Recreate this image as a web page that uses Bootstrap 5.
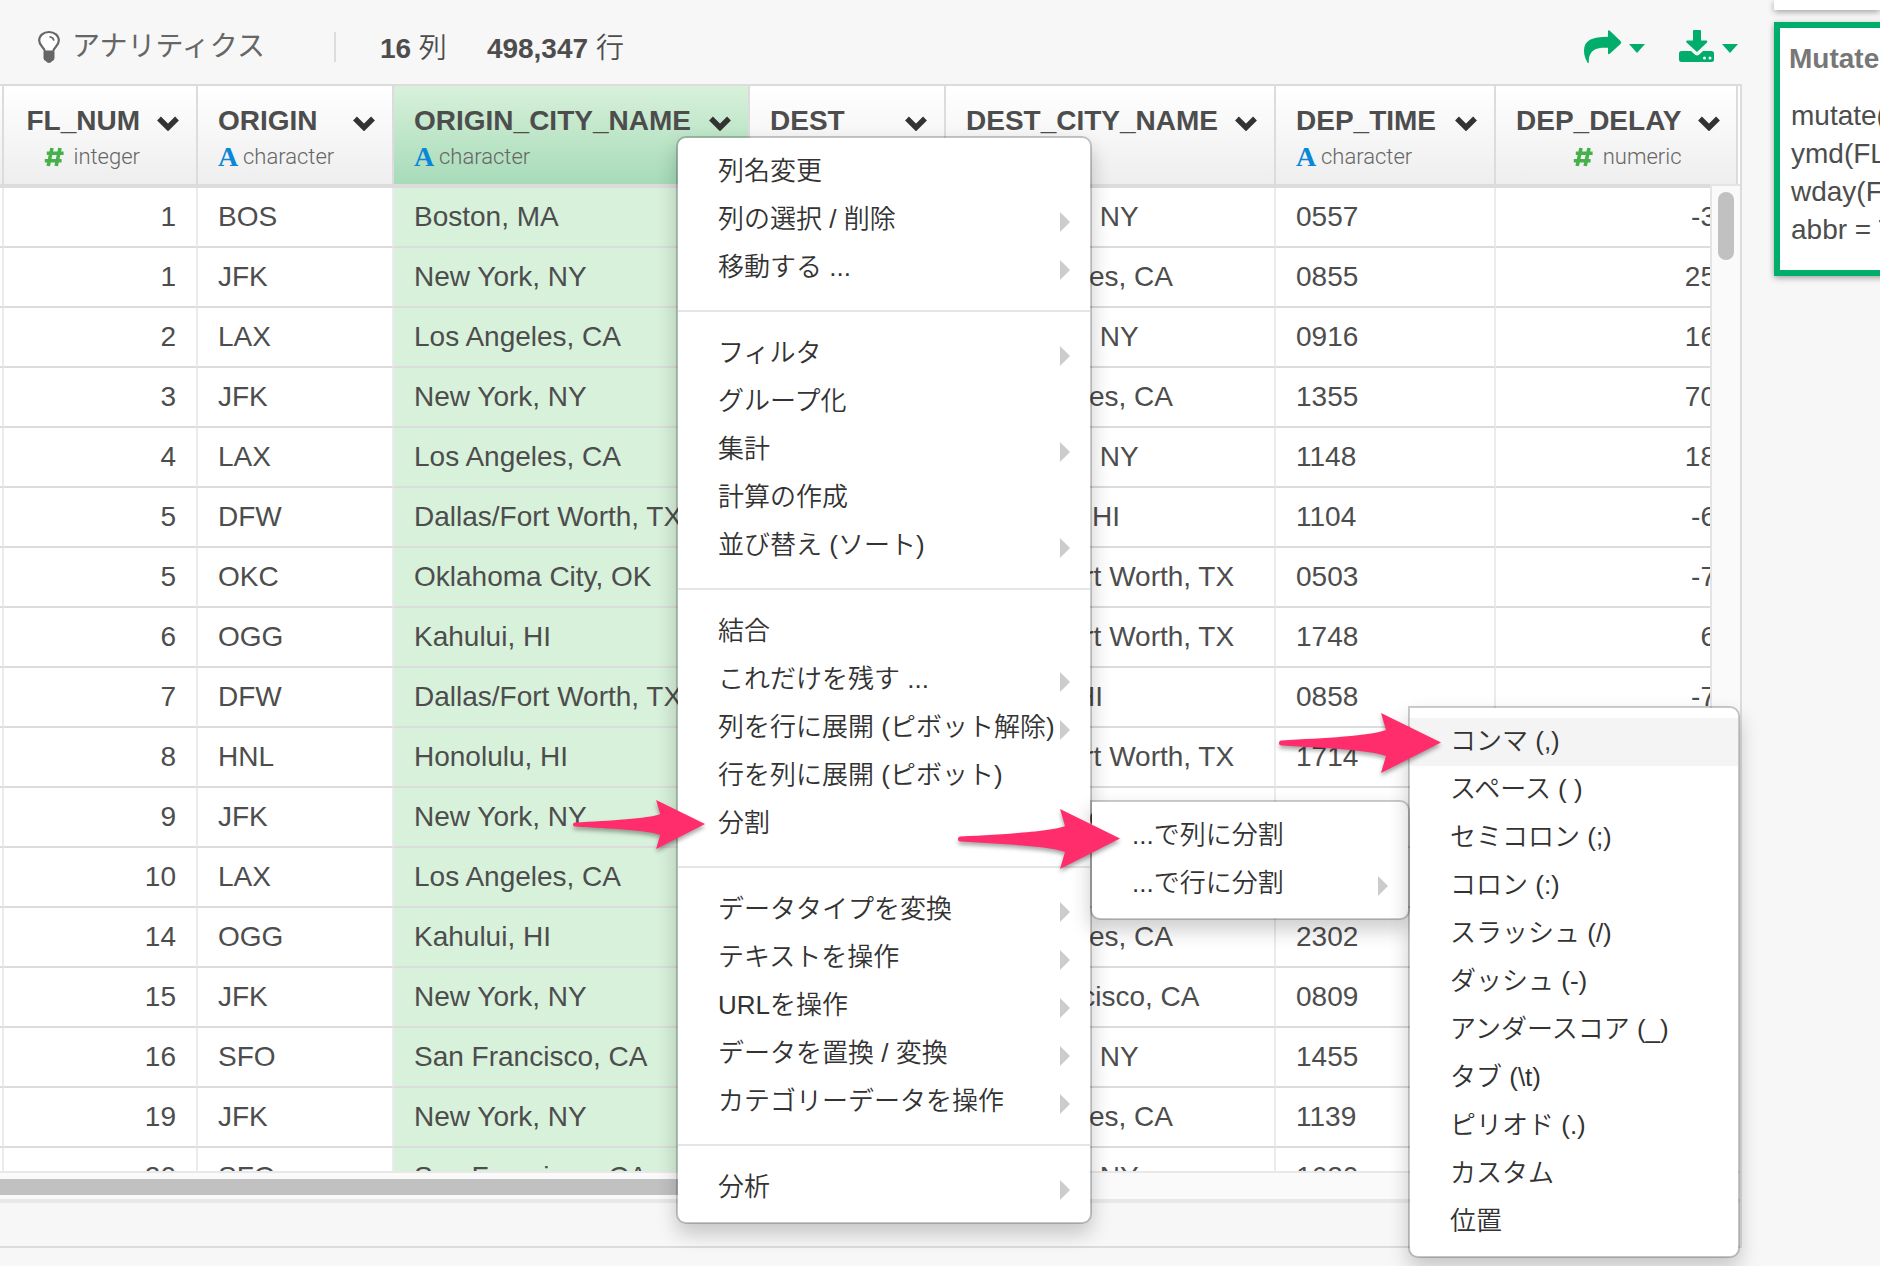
<!DOCTYPE html>
<html lang="ja">
<head>
<meta charset="utf-8">
<meta name="viewport" content="width=device-width, initial-scale=1">
<title>アナリティクス</title>
<link rel="stylesheet" href="https://cdn.jsdelivr.net/npm/bootstrap@5.3.0/dist/css/bootstrap.min.css">
<style>
:root { --accent: #00ad6b; --line: #dcdcdc; --ink: #4d4d4d; }
body { background: #f7f7f7; color: var(--ink); font-family: "Liberation Sans", "Noto Sans CJK JP", sans-serif; font-size: 28px; line-height: 40px; font-weight: 400; }
.app-shell { height: 100vh; overflow: hidden; }
.main-pane { min-width: 0; padding-bottom: 18px; }
.side-pane { width: 106px; margin-left: 32px; white-space: nowrap; }

.top-bar { height: 84px; padding: 10px 4px 0 36px; }
.analytics-link { color: #666; font-weight: 400; }
.bar-rule { width: 2px; height: 30px; background: #ddd; margin: 0 44px 0 69px; }
.count-unit { font-weight: 350; }
.count-gap { margin-left: 40px; }
.tool-btn { color: var(--accent); background: none; border: 0; padding: 0; }
.tool-gap { margin-left: 34px; }

.grid-frame { border: solid var(--line); border-width: 2px 2px 2px 0; min-height: 0; }
.grid-view { min-height: 0; }
.grid-table { table-layout: fixed; width: 1738px; border-collapse: separate; border-spacing: 0; background: #fff; }
.grid-table th, .grid-table td { overflow: hidden; white-space: nowrap; }
.grid-table th { height: 102px; padding: 16px 17px 0 20px; border-right: 2px solid var(--line); border-bottom: 4px solid var(--line); background: linear-gradient(#fff, #eee); vertical-align: top; font-weight: 700; }
.grid-table td { height: 60px; padding: 0 20px; border-right: 2px solid #ebebeb; border-bottom: 2px solid var(--line); vertical-align: middle; }
.grid-table th.edge, .grid-table td.edge { padding: 0; }
.grid-table th.picked { background: linear-gradient(#d8f1da, #a7dbb9); }
.grid-table td:nth-child(4) { background: #d8f1db; }
.grid-table td:nth-child(2), .grid-table td:nth-child(8) { text-align: right; }
.head-right { margin-right: 17px; }
.head-name { line-height: 38px; }
.head-kind { font: 300 22px/34px Roboto, sans-serif; color: #666; }
.kind-char { font: 700 28px/34px "Liberation Serif", serif; color: #0a87d8; width: 20px; margin-right: 5px; }
.kind-num { margin-right: 10px; }
.chev-btn { background: none; border: 0; padding: 0; width: 22px; margin-top: 14px; line-height: 0; color: #333; }

.v-track { right: 0; top: 98px; bottom: 0; width: 30px; background: #fafafa; border: solid #e4e4e4; border-width: 2px 0 0 2px; padding: 6px; }
.v-thumb { width: 16px; height: 68px; border-radius: 8px; background: #c1c1c1; }
.h-track { border: solid #e8e8e8; border-width: 2px 0 4px; background: #fafafa; padding: 6px 0 4px; }
.h-thumb { width: 50%; height: 16px; border-radius: 0 8px 8px 0; background: #c1c1c1; }
.grid-foot { height: 44px; }

.step-card { background: #fff; box-shadow: 0 2px 6px rgba(0,0,0,.35); }
.step-stub { height: 10px; margin-bottom: 12px; }
.step-on { border: 6px solid var(--accent); height: 254px; padding: 11px 9px; width: 400px; }
.step-title { font-size: 28px; line-height: 40px; font-weight: 700; color: #777; margin: 0 0 18px; }
.step-code { font-size: 28px; line-height: 38px; margin: 0 0 0 2px; }

.col-menu.dropdown-menu { border: 2px solid rgba(0,0,0,.2); border-radius: 10px; padding: 10px 0; margin: 0; font-size: 26px; color: #333; background-color: #fff; background-clip: padding-box; box-shadow: 0 10px 20px rgba(0,0,0,.2); }
.col-menu .dropdown-item { height: 48px; line-height: 44px; padding: 0 20px 2px 40px; color: #333; font-weight: 350; display: flex; justify-content: space-between; align-items: center; }
.col-menu .dropdown-item.lit { background: #f4f4f4; }
.col-menu .more::after { content: ""; border: solid transparent; border-width: 10px 0 10px 10px; border-left-color: #ccc; margin-top: 6px; margin-left: -10px; }
.col-menu .dropdown-divider { margin: 18px 0; border-top: 2px solid #e5e5e5; opacity: 1; }
.menu-main { left: 676px; top: 136px; width: 416px; }
.menu-split.dropdown-menu { left: 100%; top: 0; width: 320px; border-top-left-radius: 0; }
.menu-sep.dropdown-menu { left: 100%; top: -106px; width: 332px; border-top-left-radius: 0; }
.pointer { z-index: 1100; filter: drop-shadow(0 3px 2px rgba(0,0,0,.35)); overflow: visible; }
.pointer-a { left: 573px; top: 799px; }
.pointer-b { left: 958px; top: 809px; }
.pointer-c { left: 1279px; top: 713px; }
</style>
<script src="https://cdn.jsdelivr.net/npm/bootstrap@5.3.0/dist/js/bootstrap.bundle.min.js"></script>
</head>
<body>
<svg class="d-none" aria-hidden="true">
  <symbol id="chev" viewBox="0 0 22 15"><path d="M2 2.5 L11 11.5 L20 2.5" fill="none" stroke="currentColor" stroke-width="5.4"/></symbol>
  <symbol id="hash" viewBox="0 0 20 20"><path d="M8 1 L4.2 19 M16 1 L12.2 19 M2.8 6.3 H19.6 M0.8 13.7 H17.6" fill="none" stroke="#46b04a" stroke-width="3.6"/></symbol>
  <symbol id="pink" viewBox="0 0 162 60"><path d="M2.5 27.5 C45 25 92 23 107 17 L102 0 L162 29.5 L102 60 L107 43 C92 37 45 35 2.5 32.5 A2.5 2.5 0 0 1 2.5 27.5Z" fill="#ff2d6b"/></symbol>
</svg>

<div class="app-shell d-flex position-relative">
  <main class="main-pane flex-grow-1 d-flex flex-column">
    <header class="top-bar d-flex align-items-center flex-shrink-0">
      <a href="#" class="analytics-link d-flex align-items-center text-decoration-none">
        <svg class="me-2" width="28" height="34" viewBox="0 0 28 34" aria-hidden="true"><path d="M8.8 21.5 C8.6 17.5 3.2 16.2 3.2 10.6 C3.2 5.4 7.5 2 13 2 C18.5 2 22.8 5.4 22.8 10.6 C22.8 16.2 17.4 17.5 17.2 21.5Z" fill="#fff" stroke="#666" stroke-width="2.2"/><path d="M13.5 6.8 Q17.3 7 17.8 10.6" fill="none" stroke="#666" stroke-width="1.8"/><path d="M7.5 22 H18.5 V28 Q18.5 30.5 16 31.2 Q15 33 13 33 Q11 33 10 31.2 Q7.5 30.5 7.5 28Z" fill="#666"/></svg>
        <span>アナリティクス</span>
      </a>
      <div class="bar-rule"></div>
      <div class="pt-1"><b>16</b> <span class="count-unit">列</span></div>
      <div class="pt-1 count-gap"><b>498,347</b> <span class="count-unit">行</span></div>
      <button type="button" class="tool-btn d-flex align-items-center ms-auto" aria-label="共有">
        <svg width="61" height="36" viewBox="0 0 61 36" aria-hidden="true"><path d="M24 2.5 Q24 0.5 25.8 1.8 L36.5 12 Q38 13.5 36.5 15 L25.8 24.8 Q24 26 24 24 V18.8 C14 18.3 4.8 19.5 4.8 33 Q4.6 35 3.4 33.5 C1.5 30 0 26.5 0 21.5 C0 11.5 8 7.800 24 7.800Z M45 15 H61 L53 24Z" fill="currentColor"/></svg>
      </button>
      <button type="button" class="tool-btn tool-gap d-flex align-items-center" aria-label="ダウンロード">
        <svg width="59" height="36" viewBox="0 0 59 36" aria-hidden="true"><path d="M14 2 Q14 1 15 1 H21 Q22 1 22 2 V11.5 H27.5 Q29 12 28 13.5 L18 23 L7.5 13.5 Q6.5 12 8 11.5 H14Z M2.5 22 H12 L16 25.8 Q18 27.2 20 25.8 L24 22 H32.5 Q35 22 35 24.5 V30.5 Q35 33 32.5 33 H2.5 Q0 33 0 30.5 V24.5 Q0 22 2.5 22Z M43 15 H59 L51 24Z" fill="currentColor"/><circle cx="25.5" cy="29" r="1.5" fill="#fff"/><circle cx="31" cy="29" r="1.5" fill="#fff"/></svg>
      </button>
    </header>

    <section class="grid-frame flex-grow-1 d-flex flex-column">
      <div class="grid-view flex-grow-1 overflow-hidden position-relative bg-white">
        <table class="grid-table">
          <colgroup><col style="width:4px"><col style="width:194px"><col style="width:196px"><col style="width:356px"><col style="width:196px"><col style="width:330px"><col style="width:220px"><col style="width:242px"></colgroup>
          <thead>
            <tr>
              <th class="edge"></th>
              <th><div class="d-flex justify-content-between align-items-start"><div class="head-right text-end flex-grow-1"><div class="head-name">FL_NUM</div><div class="head-kind d-flex align-items-center justify-content-end"><svg class="kind-num" width="20" height="20" aria-hidden="true"><use href="#hash"/></svg>integer</div></div><button type="button" class="chev-btn flex-shrink-0" aria-label="FL_NUM メニュー"><svg width="22" height="15"><use href="#chev"/></svg></button></div></th>
              <th><div class="d-flex justify-content-between align-items-start"><div><div class="head-name">ORIGIN</div><div class="head-kind d-flex"><span class="kind-char">A</span>character</div></div><button type="button" class="chev-btn flex-shrink-0" aria-label="ORIGIN メニュー"><svg width="22" height="15"><use href="#chev"/></svg></button></div></th>
              <th class="picked"><div class="d-flex justify-content-between align-items-start"><div><div class="head-name">ORIGIN_CITY_NAME</div><div class="head-kind d-flex"><span class="kind-char">A</span>character</div></div><button type="button" class="chev-btn flex-shrink-0" aria-label="ORIGIN_CITY_NAME メニュー"><svg width="22" height="15"><use href="#chev"/></svg></button></div></th>
              <th><div class="d-flex justify-content-between align-items-start"><div><div class="head-name">DEST</div><div class="head-kind d-flex"><span class="kind-char">A</span>character</div></div><button type="button" class="chev-btn flex-shrink-0" aria-label="DEST メニュー"><svg width="22" height="15"><use href="#chev"/></svg></button></div></th>
              <th><div class="d-flex justify-content-between align-items-start"><div><div class="head-name">DEST_CITY_NAME</div><div class="head-kind d-flex"><span class="kind-char">A</span>character</div></div><button type="button" class="chev-btn flex-shrink-0" aria-label="DEST_CITY_NAME メニュー"><svg width="22" height="15"><use href="#chev"/></svg></button></div></th>
              <th><div class="d-flex justify-content-between align-items-start"><div><div class="head-name">DEP_TIME</div><div class="head-kind d-flex"><span class="kind-char">A</span>character</div></div><button type="button" class="chev-btn flex-shrink-0" aria-label="DEP_TIME メニュー"><svg width="22" height="15"><use href="#chev"/></svg></button></div></th>
              <th><div class="d-flex justify-content-between align-items-start"><div class="head-right text-end flex-grow-1"><div class="head-name">DEP_DELAY</div><div class="head-kind d-flex align-items-center justify-content-end"><svg class="kind-num" width="20" height="20" aria-hidden="true"><use href="#hash"/></svg>numeric</div></div><button type="button" class="chev-btn flex-shrink-0" aria-label="DEP_DELAY メニュー"><svg width="22" height="15"><use href="#chev"/></svg></button></div></th>
            </tr>
          </thead>
          <tbody>
            <tr><td class="edge"></td><td>1</td><td>BOS</td><td>Boston, MA</td><td>JFK</td><td>New York, NY</td><td>0557</td><td>-3</td></tr>
            <tr><td class="edge"></td><td>1</td><td>JFK</td><td>New York, NY</td><td>LAX</td><td>Los Angeles, CA</td><td>0855</td><td>25</td></tr>
            <tr><td class="edge"></td><td>2</td><td>LAX</td><td>Los Angeles, CA</td><td>JFK</td><td>New York, NY</td><td>0916</td><td>16</td></tr>
            <tr><td class="edge"></td><td>3</td><td>JFK</td><td>New York, NY</td><td>LAX</td><td>Los Angeles, CA</td><td>1355</td><td>70</td></tr>
            <tr><td class="edge"></td><td>4</td><td>LAX</td><td>Los Angeles, CA</td><td>JFK</td><td>New York, NY</td><td>1148</td><td>18</td></tr>
            <tr><td class="edge"></td><td>5</td><td>DFW</td><td>Dallas/Fort Worth, TX</td><td>HNL</td><td>Honolulu, HI</td><td>1104</td><td>-6</td></tr>
            <tr><td class="edge"></td><td>5</td><td>OKC</td><td>Oklahoma City, OK</td><td>DFW</td><td>Dallas/Fort Worth, TX</td><td>0503</td><td>-7</td></tr>
            <tr><td class="edge"></td><td>6</td><td>OGG</td><td>Kahului, HI</td><td>DFW</td><td>Dallas/Fort Worth, TX</td><td>1748</td><td>6</td></tr>
            <tr><td class="edge"></td><td>7</td><td>DFW</td><td>Dallas/Fort Worth, TX</td><td>OGG</td><td>Kahului, HI</td><td>0858</td><td>-7</td></tr>
            <tr><td class="edge"></td><td>8</td><td>HNL</td><td>Honolulu, HI</td><td>DFW</td><td>Dallas/Fort Worth, TX</td><td>1714</td><td></td></tr>
            <tr><td class="edge"></td><td>9</td><td>JFK</td><td>New York, NY</td><td>LAX</td><td>Los Angeles, CA</td><td></td><td></td></tr>
            <tr><td class="edge"></td><td>10</td><td>LAX</td><td>Los Angeles, CA</td><td>JFK</td><td>New York, NY</td><td></td><td></td></tr>
            <tr><td class="edge"></td><td>14</td><td>OGG</td><td>Kahului, HI</td><td>LAX</td><td>Los Angeles, CA</td><td>2302</td><td></td></tr>
            <tr><td class="edge"></td><td>15</td><td>JFK</td><td>New York, NY</td><td>SFO</td><td>San Francisco, CA</td><td>0809</td><td></td></tr>
            <tr><td class="edge"></td><td>16</td><td>SFO</td><td>San Francisco, CA</td><td>JFK</td><td>New York, NY</td><td>1455</td><td></td></tr>
            <tr><td class="edge"></td><td>19</td><td>JFK</td><td>New York, NY</td><td>LAX</td><td>Los Angeles, CA</td><td>1139</td><td></td></tr>
            <tr><td class="edge"></td><td>20</td><td>SFO</td><td>San Francisco, CA</td><td>JFK</td><td>New York, NY</td><td>1620</td><td></td></tr>
          </tbody>
        </table>
        <div class="v-track position-absolute"><div class="v-thumb"></div></div>
      </div>
      <div class="h-track"><div class="h-thumb"></div></div>
      <div class="grid-foot"></div>
    </section>
  </main>

  <aside class="side-pane flex-shrink-0">
    <div class="step-card step-stub"></div>
    <div class="step-card step-on">
      <h2 class="step-title">Mutate</h2>
      <p class="step-code">mutate(<br>ymd(FL_<br>wday(FL_<br>abbr = T</p>
    </div>
  </aside>

  <ul class="col-menu menu-main dropdown-menu show">
    <li><a class="dropdown-item" href="#">列名変更</a></li>
    <li><a class="dropdown-item more" href="#">列の選択 / 削除</a></li>
    <li><a class="dropdown-item more" href="#">移動する ...</a></li>
    <li><hr class="dropdown-divider"></li>
    <li><a class="dropdown-item more" href="#">フィルタ</a></li>
    <li><a class="dropdown-item" href="#">グループ化</a></li>
    <li><a class="dropdown-item more" href="#">集計</a></li>
    <li><a class="dropdown-item" href="#">計算の作成</a></li>
    <li><a class="dropdown-item more" href="#">並び替え (ソート)</a></li>
    <li><hr class="dropdown-divider"></li>
    <li><a class="dropdown-item" href="#">結合</a></li>
    <li><a class="dropdown-item more" href="#">これだけを残す ...</a></li>
    <li><a class="dropdown-item more" href="#">列を行に展開 (ピボット解除)</a></li>
    <li><a class="dropdown-item" href="#">行を列に展開 (ピボット)</a></li>
    <li class="position-relative"><a class="dropdown-item" href="#">分割</a>
      <ul class="col-menu menu-split dropdown-menu show">
        <li class="position-relative"><a class="dropdown-item" href="#">...で列に分割</a>
          <ul class="col-menu menu-sep dropdown-menu show">
            <li><a class="dropdown-item lit" href="#">コンマ (,)</a></li>
            <li><a class="dropdown-item" href="#">スペース ( )</a></li>
            <li><a class="dropdown-item" href="#">セミコロン (;)</a></li>
            <li><a class="dropdown-item" href="#">コロン (:)</a></li>
            <li><a class="dropdown-item" href="#">スラッシュ (/)</a></li>
            <li><a class="dropdown-item" href="#">ダッシュ (-)</a></li>
            <li><a class="dropdown-item" href="#">アンダースコア (_)</a></li>
            <li><a class="dropdown-item" href="#">タブ (\t)</a></li>
            <li><a class="dropdown-item" href="#">ピリオド (.)</a></li>
            <li><a class="dropdown-item" href="#">カスタム</a></li>
            <li><a class="dropdown-item" href="#">位置</a></li>
          </ul>
        </li>
        <li><a class="dropdown-item more" href="#">...で行に分割</a></li>
      </ul>
    </li>
    <li><hr class="dropdown-divider"></li>
    <li><a class="dropdown-item more" href="#">データタイプを変換</a></li>
    <li><a class="dropdown-item more" href="#">テキストを操作</a></li>
    <li><a class="dropdown-item more" href="#">URLを操作</a></li>
    <li><a class="dropdown-item more" href="#">データを置換 / 変換</a></li>
    <li><a class="dropdown-item more" href="#">カテゴリーデータを操作</a></li>
    <li><hr class="dropdown-divider"></li>
    <li><a class="dropdown-item more" href="#">分析</a></li>
  </ul>

  <svg class="pointer pointer-a position-absolute" width="132" height="51" aria-hidden="true"><use href="#pink"/></svg>
  <svg class="pointer pointer-b position-absolute" width="162" height="60" aria-hidden="true"><use href="#pink"/></svg>
  <svg class="pointer pointer-c position-absolute" width="162" height="60" aria-hidden="true"><use href="#pink"/></svg>
</div>
</body>
</html>
